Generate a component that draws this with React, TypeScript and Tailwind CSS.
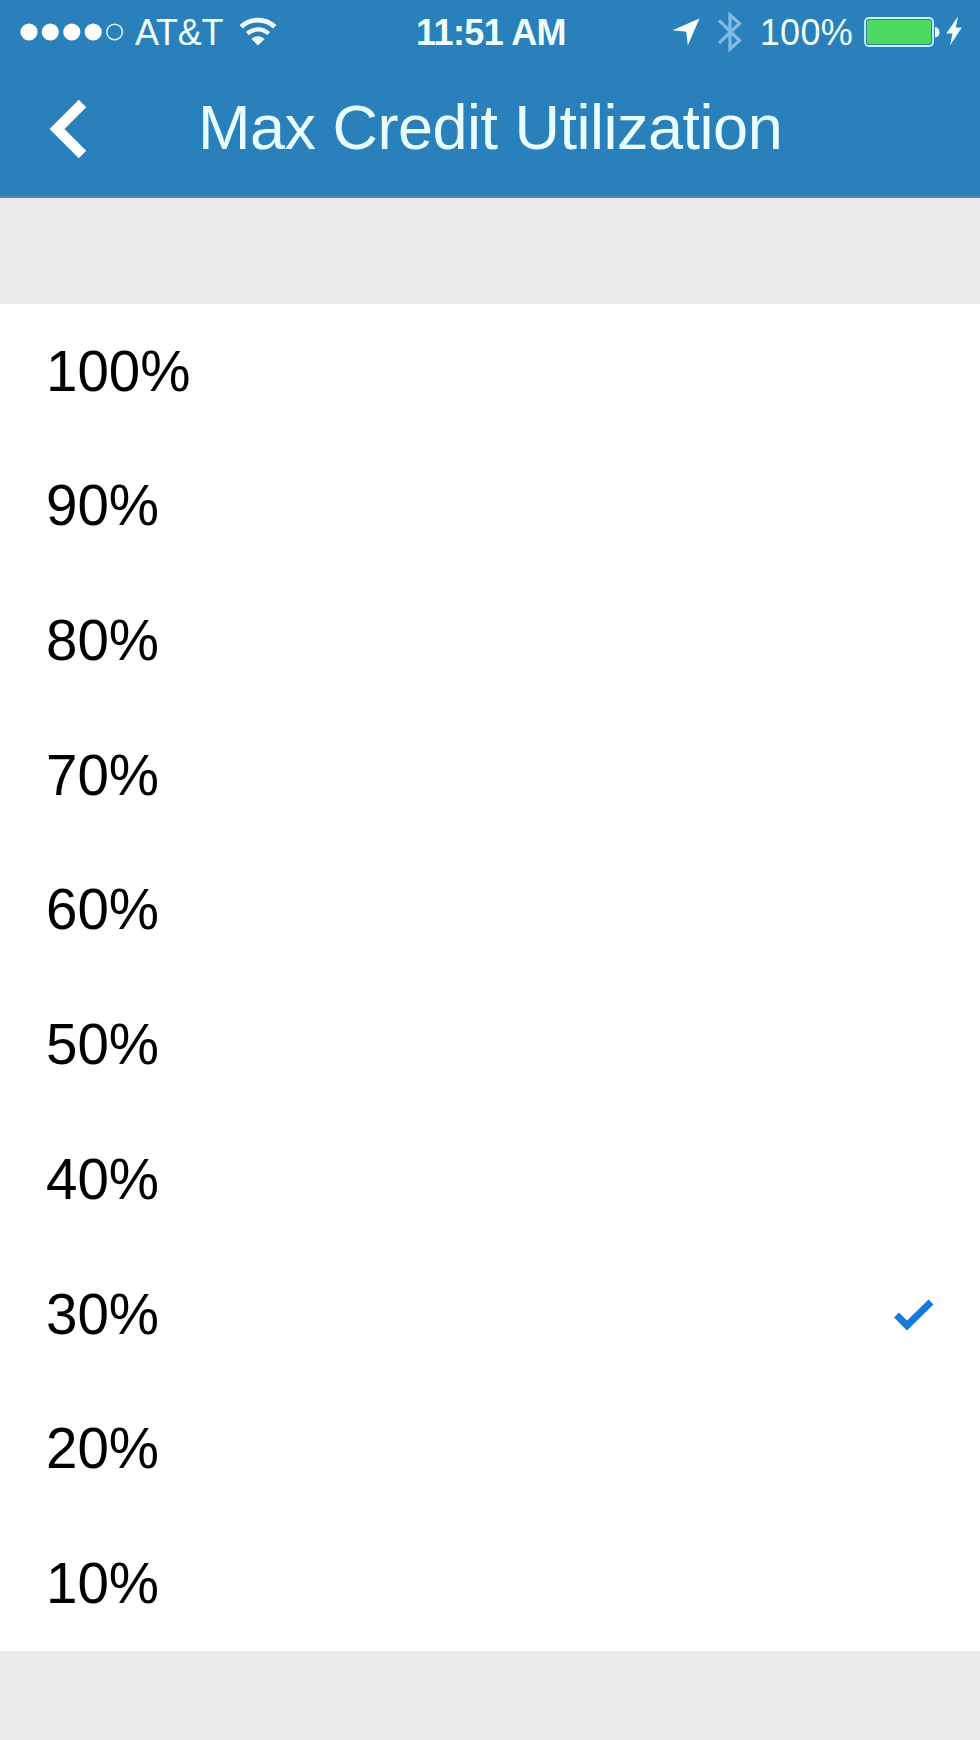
import React, { useState } from 'react';

const OPTIONS = [100, 90, 80, 70, 60, 50, 40, 30, 20, 10];

const SignalDots = () => (
  <svg width="104" height="18" viewBox="0 0 104 18" fill="#fff" className="shrink-0">
    <circle cx="9" cy="9" r="8.6" />
    <circle cx="30.3" cy="9" r="8.6" />
    <circle cx="51.8" cy="9" r="8.6" />
    <circle cx="73.2" cy="9" r="8.6" />
    <circle cx="94.6" cy="9" r="7.8" fill="none" stroke="#d8f4ff" strokeWidth="1.5" />
  </svg>
);

const WifiIcon = () => (
  <svg width="38" height="29" viewBox="0 0 38 29" className="shrink-0">
    <path d="M2.2 9.8a24.5 24.5 0 0 1 33.6 0" fill="none" stroke="#f0fdff" strokeWidth="4.8" />
    <path d="M8.4 16.6a15.6 15.6 0 0 1 21.2 0" fill="none" stroke="#f0fdff" strokeWidth="4.2" />
    <path d="M12.4 22a9.6 9.6 0 0 1 13.2 0L19 28.5z" fill="#f0fdff" />
  </svg>
);

const LocationIcon = () => (
  <svg width="28" height="28" viewBox="0 0 28 28" fill="#fff" className="shrink-0">
    <path d="M27.5.5 15.8 27.5 14.3 13.8.5 12.2z" />
  </svg>
);

const BluetoothIcon = () => (
  <svg width="24" height="42" viewBox="0 0 24 42" fill="none" stroke="#82b9e2" strokeWidth="3.3" className="shrink-0">
    <path d="M1 9.5 21.5 29.5 12 38V4L21.5 12.5 1 32" />
  </svg>
);

const BatteryIcon = () => (
  <svg width="76" height="30" viewBox="0 0 76 30" className="shrink-0">
    <rect x="1" y="1" width="68" height="28" rx="4" fill="none" stroke="#c8f6ff" strokeWidth="1.8" />
    <rect x="3" y="3" width="64" height="24" rx="2" fill="#4cd964" />
    <path d="M71 10c6 .6 6 9.9 0 10.500z" fill="#f0fdff" />
  </svg>
);

const BoltIcon = () => (
  <svg width="16" height="30" viewBox="0 0 16 30" fill="#f0fdff" className="shrink-0">
    <path d="M12 .5 .3 17.500H6.500L4 29.500 15.900 11.500H9.800z" />
  </svg>
);

const StatusBar = () => (
  <div className="flex h-16 items-center text-[36px] leading-none text-[#f0fdff]">
    <div className="flex flex-1 items-center pl-5">
      <SignalDots />
      <span className="ml-[11px] pt-0.5 tracking-[-0.3px]">AT&amp;T</span>
      <div className="ml-4 pb-0.5">
        <WifiIcon />
      </div>
    </div>
    <span className="pt-0.5 font-bold tracking-[-0.6px]">11:51 AM</span>
    <div className="flex flex-1 items-center justify-end pr-[18px]">
      <LocationIcon />
      <div className="ml-[18px]">
        <BluetoothIcon />
      </div>
      <span className="ml-[18px] pt-0.5 tracking-[0.3px]">100%</span>
      <div className="ml-[11px]">
        <BatteryIcon />
      </div>
      <div className="ml-1.5 pb-0.5">
        <BoltIcon />
      </div>
    </div>
  </div>
);

export default function App() {
  const [selected, setSelected] = useState(30);

  return (
    <div className="flex h-[1740px] w-[980px] flex-col overflow-hidden bg-[#ebebeb] font-['Liberation_Sans',Arial,sans-serif]">
      <header className="h-[198px] shrink-0 border-b-2 border-[#5b88ab] bg-[#2980bb]">
        <StatusBar />
        <div className="flex h-[128px] items-center pl-[50px]">
          <button type="button" aria-label="Back" className="shrink-0 pt-0.5">
            <svg width="37" height="60" viewBox="0 0 37 60" fill="none" stroke="#fff" strokeWidth="10.500">
              <path d="M32.500 4.500 7 30 32.500 55.500" />
            </svg>
          </button>
          <h1 className="ml-[111px] pb-0.5 whitespace-nowrap text-[63px] leading-none tracking-[-0.5px] text-[#e8fdff]">
            Max Credit Utilization
          </h1>
        </div>
      </header>

      <ul className="mt-[106px] flex h-[1347px] shrink-0 flex-col bg-white">
        {OPTIONS.map((value) => (
          <li key={value} className="flex-1">
            <button
              type="button"
              onClick={() => setSelected(value)}
              className="flex h-full w-full items-center justify-between pr-[46px] pl-[46px] text-[56.500px] leading-none text-black"
            >
              <span className="pt-px">{value}%</span>
              {selected === value && (
                <svg width="40" height="34" viewBox="0 0 40 34" fill="none" stroke="#1679dc" strokeWidth="7">
                  <path d="M2.500 18 13 28.500 37 5" />
                </svg>
              )}
            </button>
          </li>
        ))}
      </ul>
    </div>
  );
}
